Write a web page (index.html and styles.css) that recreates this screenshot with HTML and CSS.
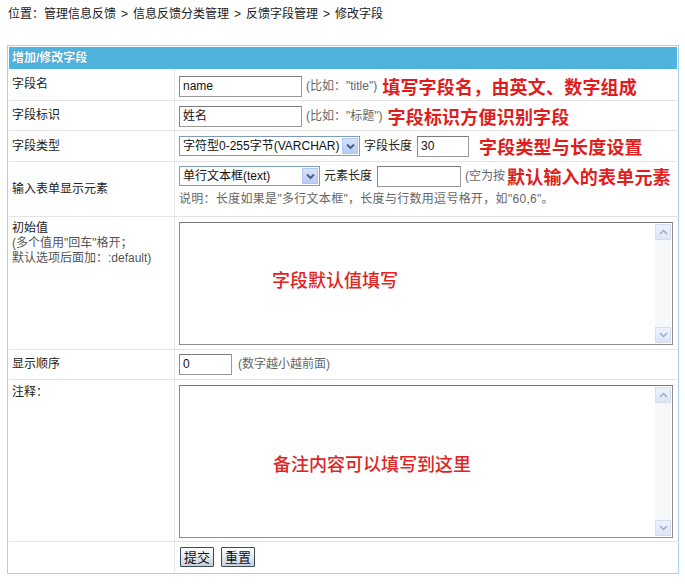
FILE: index.html
```html
<!DOCTYPE html>
<html lang="zh-CN">
<head>
<meta charset="utf-8">
<title>修改字段</title>
<link rel="stylesheet" href="styles.css">
</head>
<body>
<div class="crumb">位置：<a href="#">管理信息反馈</a><span class="sep">&gt;</span><a href="#">信息反馈分类管理</a><span class="sep">&gt;</span><a href="#">反馈字段管理</a><span class="sep">&gt;</span>修改字段</div>

<div class="panel">
  <div class="panel-head">增加/修改字段</div>

  <div class="row r1">
    <div class="lab">字段名</div>
    <div class="val">
      <span class="inp w123">name</span>
      <span class="hint">(比如："title")</span>
      <span class="note">填写字段名，由英文、数字组成</span>
    </div>
  </div>

  <div class="row r2">
    <div class="lab">字段标识</div>
    <div class="val">
      <span class="inp w123">姓名</span>
      <span class="hint">(比如："标题")</span>
      <span class="note">字段标识方便识别字段</span>
    </div>
  </div>

  <div class="row r3">
    <div class="lab">字段类型</div>
    <div class="val">
      <span class="select w181"><span class="sel-text">字符型0-255字节(VARCHAR)</span><span class="sel-arrow"><svg width="9" height="7" viewBox="0 0 9 7"><path d="M1 1.5 L4.5 5 L8 1.5" fill="none" stroke="#4d6185" stroke-width="2"/></svg></span></span>
      <span class="txt">字段长度</span>
      <span class="inp w52 g5">30</span>
      <span class="note g10">字段类型与长度设置</span>
    </div>
  </div>

  <div class="row r4">
    <div class="lab">输入表单显示元素</div>
    <div class="val col">
      <div class="line">
        <span class="select w141"><span class="sel-text">单行文本框(text)</span><span class="sel-arrow"><svg width="9" height="7" viewBox="0 0 9 7"><path d="M1 1.5 L4.5 5 L8 1.5" fill="none" stroke="#4d6185" stroke-width="2"/></svg></span></span>
        <span class="txt">元素长度</span>
        <span class="inp w84 g5"></span>
        <span class="hint">(空为按</span><span class="note tight">默认输入的表单元素</span>
      </div>
      <div class="desc">说明：长度如果是"多行文本框"，长度与行数用逗号格开，如"60,6"。</div>
    </div>
  </div>

  <div class="row r5">
    <div class="lab top">
      <div>初始值</div>
      <div class="sub">(多个值用"回车"格开；</div>
      <div class="sub">默认选项后面加：:default)</div>
    </div>
    <div class="val topv">
      <div class="textarea h123">
        <div class="ta-body p1">字段默认值填写</div>
        <div class="scrollbar">
          <span class="sb-btn"><svg width="9" height="6" viewBox="0 0 9 6"><path d="M1 5 L4.5 1.5 L8 5" fill="none" stroke="#9aaccc" stroke-width="1.5"/></svg></span>
          <span class="sb-track"></span>
          <span class="sb-btn"><svg width="9" height="6" viewBox="0 0 9 6"><path d="M1 1 L4.5 4.5 L8 1" fill="none" stroke="#9aaccc" stroke-width="1.5"/></svg></span>
        </div>
      </div>
    </div>
  </div>

  <div class="row r6">
    <div class="lab">显示顺序</div>
    <div class="val">
      <span class="inp w53">0</span>
      <span class="hint g6">(数字越小越前面)</span>
    </div>
  </div>

  <div class="row r7">
    <div class="lab top t2">注释：</div>
    <div class="val topv">
      <div class="textarea h153">
        <div class="ta-body p2">备注内容可以填写到这里</div>
        <div class="scrollbar">
          <span class="sb-btn"><svg width="9" height="6" viewBox="0 0 9 6"><path d="M1 5 L4.5 1.5 L8 5" fill="none" stroke="#9aaccc" stroke-width="1.5"/></svg></span>
          <span class="sb-track"></span>
          <span class="sb-btn"><svg width="9" height="6" viewBox="0 0 9 6"><path d="M1 1 L4.5 4.5 L8 1" fill="none" stroke="#9aaccc" stroke-width="1.5"/></svg></span>
        </div>
      </div>
    </div>
  </div>

  <div class="row r8">
    <div class="lab"></div>
    <div class="val">
      <button class="btn" type="submit">提交</button>
      <button class="btn" type="reset">重置</button>
    </div>
  </div>
</div>
</body>
</html>
```

FILE: styles.css
```css
* { box-sizing: border-box; }

body {
  margin: 0;
  background: #fff;
  color: #222;
  font-family: "Liberation Sans", "Noto Sans CJK SC", sans-serif;
  font-size: 12px;
  line-height: 15px;
}

.crumb {
  height: 45px;
  padding: 6px 8px 0;
  line-height: 16px;
  color: #222;
}
.crumb a { color: #222; text-decoration: none; }
.crumb .sep { margin: 0 5px; }

.panel {
  margin-left: 7px;
  width: 672px;
  border: 1px solid #a3d3ea;
  padding: 1px;
}

.panel-head {
  height: 22px;
  line-height: 22px;
  padding-left: 3px;
  background: #4fb3de;
  color: #fff;
  font-weight: bold;
  text-shadow: 0 0 1px #2a7fa8;
}

.row {
  display: grid;
  grid-template-columns: 166px 1fr;
  border-bottom: 1px solid #e3e3e3;
}
.row.r8 { border-bottom: 0; }
.r1 { height: 32px; }
.r2 { height: 30px; }
.r3 { height: 31px; }
.r4 { height: 55px; }
.r5 { height: 133px; }
.r6 { height: 30px; }
.r7 { height: 162px; }
.r8 { height: 30px; }
.r1 .val { padding-top: 3px; }
.r2 .val { padding-top: 1px; }

.lab {
  display: flex;
  align-items: center;
  padding-left: 3px;
  border-right: 1px solid #e6e6e6;
  color: #222;
}
.lab.top {
  flex-direction: column;
  align-items: flex-start;
  justify-content: flex-start;
  padding-top: 4px;
}
.lab.t2 { padding-top: 5px; }
.lab .sub { color: #555; }

.val {
  display: flex;
  align-items: center;
  padding-left: 4px;
  padding-right: 3px;
  white-space: nowrap;
}
.val.col {
  flex-direction: column;
  align-items: flex-start;
  justify-content: flex-start;
  padding-top: 4px;
}
.val.topv { align-items: flex-start; padding-top: 5px; }
.line { display: flex; align-items: center; height: 20px; }
.desc { margin-top: 6px; color: #666; line-height: 14px; letter-spacing: 0.3px; }

.inp {
  display: inline-block;
  height: 21px;
  line-height: 19px;
  padding: 0 3px;
  border: 1px solid #9a9a9a;
  border-top-color: #7d7d7d;
  border-left-color: #888;
  background: #fff;
  color: #111;
}
.w123 { width: 123px; }
.w52 { width: 52px; }
.w53 { width: 53px; }
.w84 { width: 84px; }

.hint { color: #666; margin-left: 4px; }
.txt { margin-left: 4px; }
.g5 { margin-left: 5px; }
.g6 { margin-left: 6px; }

.note {
  margin-left: 5px;
  color: #e01c1c;
  font-family: "Noto Sans CJK SC", sans-serif;
  font-size: 18px;
  font-weight: bold;
  line-height: 20px;
  letter-spacing: 0.2px;
}
.note.g10 { margin-left: 10px; }
.note.tight { margin-left: 2px; }

.select {
  display: inline-flex;
  align-items: stretch;
  height: 20px;
  border: 1px solid #7f9db9;
  background: #fff;
}
.w181 { width: 181px; }
.w141 { width: 141px; }
.sel-text {
  flex: 1;
  padding-left: 3px;
  line-height: 18px;
  color: #111;
  overflow: hidden;
}
.sel-arrow {
  width: 16px;
  margin: 1px;
  display: flex;
  align-items: center;
  justify-content: center;
  background: linear-gradient(#d6e1fc, #b9ccf6);
  border: 1px solid #b4c6ee;
}

.textarea {
  display: flex;
  width: 494px;
  border: 1px solid #8c8c8c;
  border-top-color: #777;
  background: #fff;
}
.h123 { height: 123px; }
.h153 { height: 153px; }
.ta-body {
  flex: 1;
  color: #e02424;
  font-family: "Noto Sans CJK SC", sans-serif;
  font-size: 18px;
  line-height: 18px;
  font-weight: 500;
}
.ta-body.p1 { padding: 47px 0 0 92px; }
.ta-body.p2 { padding: 68px 0 0 93px; }

.scrollbar {
  width: 16px;
  margin: 1px 1px 1px 0;
  display: flex;
  flex-direction: column;
  background: #f7f8fa;
}
.sb-btn {
  height: 16px;
  display: flex;
  align-items: center;
  justify-content: center;
  background: linear-gradient(#eef2fb, #dde5f6);
  border: 1px solid #d4ddf0;
}
.sb-track { flex: 1; }

.btn {
  height: 20px;
  margin: 0 4px 0 1px;
  padding: 0 3px;
  border: 1px solid #3c4a5a;
  border-radius: 1px;
  background: linear-gradient(#ffffff, #dfe4ec 60%, #c9d0da);
  color: #111;
  font-family: "Noto Sans CJK SC", sans-serif;
  font-size: 13px;
  line-height: 16px;
}
.btn + .btn { margin-left: 3px; }
```
